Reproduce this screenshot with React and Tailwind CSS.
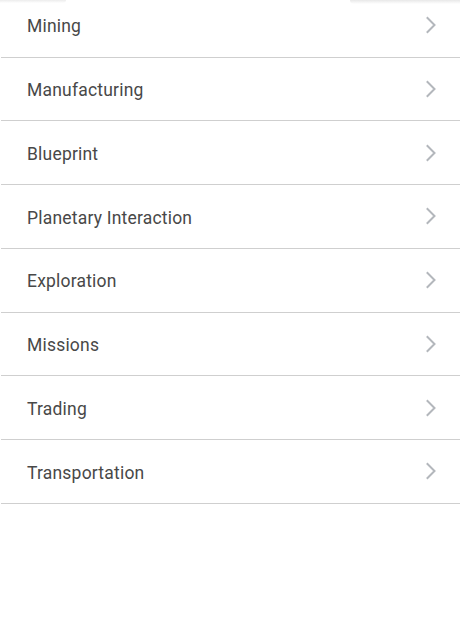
import React from "react";

const items = [
  "Mining",
  "Manufacturing",
  "Blueprint",
  "Planetary Interaction",
  "Exploration",
  "Missions",
  "Trading",
  "Transportation",
];

function Chevron() {
  return (
    <svg width="12" height="18" viewBox="0 0 12 18" fill="none" className="shrink-0">
      <path d="M2.5 2 L9.5 9 L2.5 16" stroke="#b3b7bc" strokeWidth="2" strokeLinecap="square" strokeLinejoin="miter" />
    </svg>
  );
}

export default function App() {
  return (
    <div className="relative w-[460px] h-[619px] bg-white overflow-hidden" style={{ fontFamily: "Roboto, 'Liberation Sans', sans-serif" }}>
      <div className="absolute left-0 top-0 w-[66px] h-[3px] bg-gradient-to-b from-[#ececec] to-white rounded-br" />
      <div className="absolute left-[350px] top-0 w-[110px] h-[4px] bg-gradient-to-b from-[#e8e8e8] to-white rounded-bl-md" />
      <div className="flex flex-col -mt-[6.25px]">
        {items.map((t) => (
          <div key={t} className="flex items-center justify-between h-[63.75px] pl-[26px] pr-[23px] border-b border-[#cfcfcf] ml-[1px]">
            <span className="text-[17.5px] tracking-[0.2px] text-[#484848] leading-none pt-[4px]">{t}</span>
            <Chevron />
          </div>
        ))}
      </div>
    </div>
  );
}
